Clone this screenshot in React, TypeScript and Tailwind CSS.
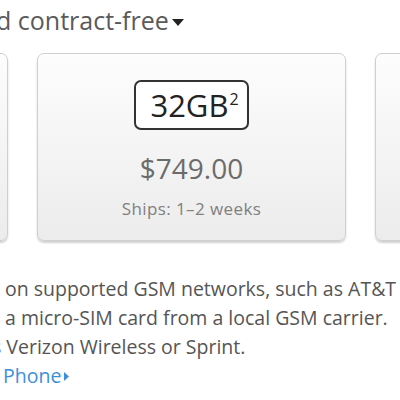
export default function App() {
  const cards = [
    { size: "16GB", price: "$649.00" },
    { size: "32GB", price: "$749.00" },
    { size: "64GB", price: "$849.00" },
  ];

  return (
    <div
      className="w-[400px] h-[400px] overflow-hidden bg-white"
      style={{ fontFamily: '"Open Sans", "DejaVu Sans", sans-serif' }}
    >
      <div className="pt-[4px] flex items-center text-[25px] leading-[32px] text-[#5a5a5a] whitespace-nowrap">
        <span className="-ml-[4px]">d contract-free</span>
        <svg className="ml-[3px] mt-[4px]" width="12" height="7" viewBox="0 0 12 7">
          <path d="M0 0h12L6 7z" fill="#222" />
        </svg>
      </div>

      <div className="mt-[17px] flex gap-[29px] -ml-[301px]">
        {cards.map((card) => (
          <div
            key={card.size}
            className="shrink-0 w-[309px] h-[188px] rounded-[7px] border border-[#cfcfcf] bg-gradient-to-b from-[#fdfdfd] to-[#ececec] shadow-[0_2px_2px_rgba(0,0,0,0.18)] flex flex-col items-center"
          >
            <div className="mt-[26px] w-[115px] h-[50px] rounded-[7px] border-2 border-[#333] bg-white flex items-center justify-center text-[#222]">
              <span className="text-[31px] leading-none ml-[6px]">{card.size}</span>
              <span className="text-[16px] leading-none self-start mt-[9px] ml-[1px]">2</span>
            </div>
            <div className="mt-[24px] text-[28px] leading-none text-[#6b6b6b]">{card.price}</div>
            <div className="mt-[18px] text-[17px] tracking-[0.4px] leading-none text-[#808080]">Ships: 1–2 weeks</div>
          </div>
        ))}
      </div>

      <div className="mt-[33px] text-[19.5px] leading-[29px] text-[#555] whitespace-nowrap">
        <div className="ml-[5px]">on supported GSM networks, such as AT&amp;T and T-Mobile.</div>
        <div className="ml-[5px]">a micro-SIM card from a local GSM carrier.</div>
        <div className="-ml-[8px]">s Verizon Wireless or Sprint.</div>
        <div className="ml-[3px] flex items-center text-[#3c8fd8]">
          <span>Phone</span>
          <svg className="ml-[3px] mt-[2px]" width="5" height="9" viewBox="0 0 5 9">
            <path d="M0 0l5 4.5L0 9z" fill="#3c8fd8" />
          </svg>
        </div>
      </div>
    </div>
  );
}
